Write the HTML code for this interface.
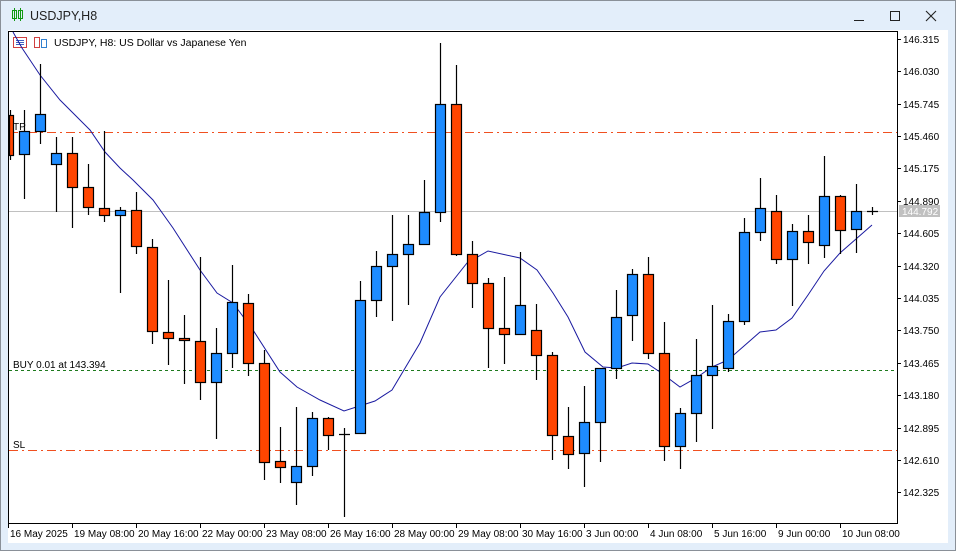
<!DOCTYPE html>
<html><head><meta charset="utf-8"><style>
body{margin:0;width:956px;height:551px;overflow:hidden;background:#e3eefa;font-family:"Liberation Sans",sans-serif}
svg{display:block}
text{font-family:"Liberation Sans",sans-serif}
</style></head><body>
<svg width="956" height="551" viewBox="0 0 956 551" xmlns="http://www.w3.org/2000/svg">
<rect x="0" y="0" width="956" height="551" fill="#e3eefa"/>
<rect x="0.5" y="0.5" width="955" height="550" fill="none" stroke="#8a9098"/>
<g fill="none" stroke="#139913" stroke-width="1">
<line x1="14.5" y1="8" x2="14.5" y2="21"/><rect x="12.5" y="10.5" width="4" height="8"/>
<line x1="20.5" y1="8" x2="20.5" y2="21"/><rect x="18.5" y="10.5" width="4" height="8"/>
</g>
<text x="30" y="20" font-size="12.5" fill="#222">USDJPY,H8</text>
<line x1="854" y1="20.5" x2="864" y2="20.5" stroke="#222"/>
<rect x="890.5" y="11.5" width="9" height="9" fill="none" stroke="#222"/>
<path d="M926 11L936 21M936 11L926 21" stroke="#222" stroke-width="1.1"/>
<rect x="8" y="30" width="940" height="513" fill="#fff"/>
<rect x="8.5" y="31.5" width="889" height="492" fill="none" stroke="#000"/>
<g fill="none" stroke-width="1">
<rect x="13.5" y="37.5" width="13" height="10" stroke="#d04040"/>
<path d="M16 40.5h8M16 42.5h8M16 44.5h8" stroke="#4060c0"/>
<rect x="34.5" y="37.5" width="5" height="10" stroke="#d04040"/>
<rect x="41.5" y="39.5" width="5" height="8" stroke="#3080d0"/>
</g>
<text x="54" y="46" font-size="10.5" fill="#000">USDJPY, H8:  US Dollar vs Japanese Yen</text>
<line x1="9" y1="211.5" x2="897" y2="211.5" stroke="#c0c0c0"/>
<line x1="9" y1="132.5" x2="897" y2="132.5" stroke="#f05020" stroke-dasharray="9,4,2,4"/>
<line x1="9" y1="450.5" x2="897" y2="450.5" stroke="#f05020" stroke-dasharray="9,4,2,4"/>
<line x1="9" y1="370.5" x2="897" y2="370.5" stroke="#1e7a1e" stroke-dasharray="3,3"/>
<text x="13" y="130" font-size="10" fill="#000">TP</text>
<text x="13" y="368" font-size="10" fill="#000">BUY 0.01 at 143.394</text>
<text x="13" y="448" font-size="10" fill="#000">SL</text>
<polyline fill="none" stroke="#1a1aa0" stroke-width="1" points="13,32 22,48 40,75 60,100 72,112 90,130 105,152 120,168 133,180 153,200 173,228 200,270 217,293 233,303 253,330 280,372 297,387 320,400 344,411 375,401 392,390 420,343 440,297 467,263 488,251 520,258 537,270 553,293 568,317 585,352 603,367 617,368 632,363 648,364 660,372 680,387 696,378 712,367 728,360 744,346 760,332 776,330 792,318 808,295 824,271 840,253 856,239 872,225"/>
<g stroke="#000" stroke-width="1.2">
<path d="M10.5 110V160M24.5 110V199M40.5 64V144M56.5 137V212M72.5 137V228M88.5 164V215M104.5 131V222M120.5 207V293M136.5 192V254M152.5 239V344M168.5 280V365M184.5 315V384M200.5 257V400M216.5 328V439M232.5 265V368M248.5 294V376M264.5 350V480M280.5 427V483M296.5 407V505M312.5 412V476M328.5 417V450M344.5 428V517M360.5 281V433M376.5 251V317M392.5 215V321M408.5 215V305M424.5 180V244M440.5 43V222M456.5 65V256M472.5 241V308M488.5 278V368M504.5 277V364M520.5 252V335M536.5 304V380M552.5 352V460M568.5 407V469M584.5 386V487M600.5 368V462M616.5 290V379M632.5 269V341M648.5 257V359M664.5 322V461M680.5 408V469M696.5 339V442M712.5 305V429M728.5 314V372M744.5 218V325M760.5 178V241M776.5 195V264M792.5 224V306M808.5 215V264M824.5 156V258M840.5 195V254M856.5 184V253M872.5 207V215M339 434.5H350M867 211.5H878"/>
<g fill="#ff4500">
<rect x="9.5" y="115.5" width="4" height="40"/>
<rect x="67.5" y="153.5" width="10" height="34"/>
<rect x="83.5" y="187.5" width="10" height="20"/>
<rect x="99.5" y="208.5" width="10" height="7"/>
<rect x="131.5" y="210.5" width="10" height="36"/>
<rect x="147.5" y="247.5" width="10" height="84"/>
<rect x="163.5" y="332.5" width="10" height="6"/>
<rect x="179.5" y="338.5" width="10" height="2"/>
<rect x="195.5" y="341.5" width="10" height="41"/>
<rect x="243.5" y="303.5" width="10" height="60"/>
<rect x="259.5" y="363.5" width="10" height="99"/>
<rect x="275.5" y="461.5" width="10" height="6"/>
<rect x="323.5" y="418.5" width="10" height="17"/>
<rect x="451.5" y="104.5" width="10" height="150"/>
<rect x="467.5" y="254.5" width="10" height="29"/>
<rect x="483.5" y="283.5" width="10" height="45"/>
<rect x="499.5" y="328.5" width="10" height="6"/>
<rect x="531.5" y="330.5" width="10" height="25"/>
<rect x="547.5" y="355.5" width="10" height="80"/>
<rect x="563.5" y="436.5" width="10" height="18"/>
<rect x="643.5" y="274.5" width="10" height="79"/>
<rect x="659.5" y="353.5" width="10" height="93"/>
<rect x="771.5" y="211.5" width="10" height="48"/>
<rect x="803.5" y="231.5" width="10" height="11"/>
<rect x="835.5" y="196.5" width="10" height="34"/>
</g>
<g fill="#1e8cff">
<rect x="19.5" y="131.5" width="10" height="23"/>
<rect x="35.5" y="114.5" width="10" height="17"/>
<rect x="51.5" y="153.5" width="10" height="11"/>
<rect x="115.5" y="210.5" width="10" height="5"/>
<rect x="211.5" y="353.5" width="10" height="29"/>
<rect x="227.5" y="302.5" width="10" height="51"/>
<rect x="291.5" y="466.5" width="10" height="16"/>
<rect x="307.5" y="418.5" width="10" height="48"/>
<rect x="355.5" y="300.5" width="10" height="133"/>
<rect x="371.5" y="266.5" width="10" height="34"/>
<rect x="387.5" y="254.5" width="10" height="12"/>
<rect x="403.5" y="244.5" width="10" height="10"/>
<rect x="419.5" y="212.5" width="10" height="32"/>
<rect x="435.5" y="104.5" width="10" height="108"/>
<rect x="515.5" y="305.5" width="10" height="29"/>
<rect x="579.5" y="422.5" width="10" height="31"/>
<rect x="595.5" y="368.5" width="10" height="54"/>
<rect x="611.5" y="317.5" width="10" height="51"/>
<rect x="627.5" y="274.5" width="10" height="41"/>
<rect x="675.5" y="413.5" width="10" height="33"/>
<rect x="691.5" y="375.5" width="10" height="38"/>
<rect x="707.5" y="366.5" width="10" height="9"/>
<rect x="723.5" y="321.5" width="10" height="47"/>
<rect x="739.5" y="232.5" width="10" height="89"/>
<rect x="755.5" y="208.5" width="10" height="24"/>
<rect x="787.5" y="231.5" width="10" height="28"/>
<rect x="819.5" y="196.5" width="10" height="49"/>
<rect x="851.5" y="211.5" width="10" height="18"/>
</g>
</g>
<g stroke="#000">
<path d="M897 39.5h4M897 71.5h4M897 104.5h4M897 136.5h4M897 168.5h4M897 201.5h4M897 233.5h4M897 266.5h4M897 298.5h4M897 330.5h4M897 363.5h4M897 395.5h4M897 428.5h4M897 460.5h4M897 492.5h4"/>
<path d="M8.5 523v5M72.5 523v5M136.5 523v5M200.5 523v5M264.5 523v5M328.5 523v5M392.5 523v5M456.5 523v5M520.5 523v5M584.5 523v5M648.5 523v5M712.5 523v5M776.5 523v5M840.5 523v5"/>
</g>
<g font-size="10" fill="#000">
<text x="903" y="43">146.315</text><text x="903" y="75">146.030</text><text x="903" y="108">145.745</text><text x="903" y="140">145.460</text><text x="903" y="172">145.175</text><text x="903" y="205">144.890</text><text x="903" y="237">144.605</text><text x="903" y="270">144.320</text><text x="903" y="302">144.035</text><text x="903" y="334">143.750</text><text x="903" y="367">143.465</text><text x="903" y="399">143.180</text><text x="903" y="432">142.895</text><text x="903" y="464">142.610</text><text x="903" y="496">142.325</text>
<text x="10" y="537">16 May 2025</text><text x="74" y="537">19 May 08:00</text><text x="138" y="537">20 May 16:00</text><text x="202" y="537">22 May 00:00</text><text x="266" y="537">23 May 08:00</text><text x="330" y="537">26 May 16:00</text><text x="394" y="537">28 May 00:00</text><text x="458" y="537">29 May 08:00</text><text x="522" y="537">30 May 16:00</text><text x="586" y="537">3 Jun 00:00</text><text x="650" y="537">4 Jun 08:00</text><text x="714" y="537">5 Jun 16:00</text><text x="778" y="537">9 Jun 00:00</text><text x="842" y="537">10 Jun 08:00</text>
</g>
<rect x="899" y="205" width="41" height="12" fill="#c0c0c0"/>
<text x="902" y="215" font-size="10" fill="#fff">144.792</text>
</svg>
</body></html>
